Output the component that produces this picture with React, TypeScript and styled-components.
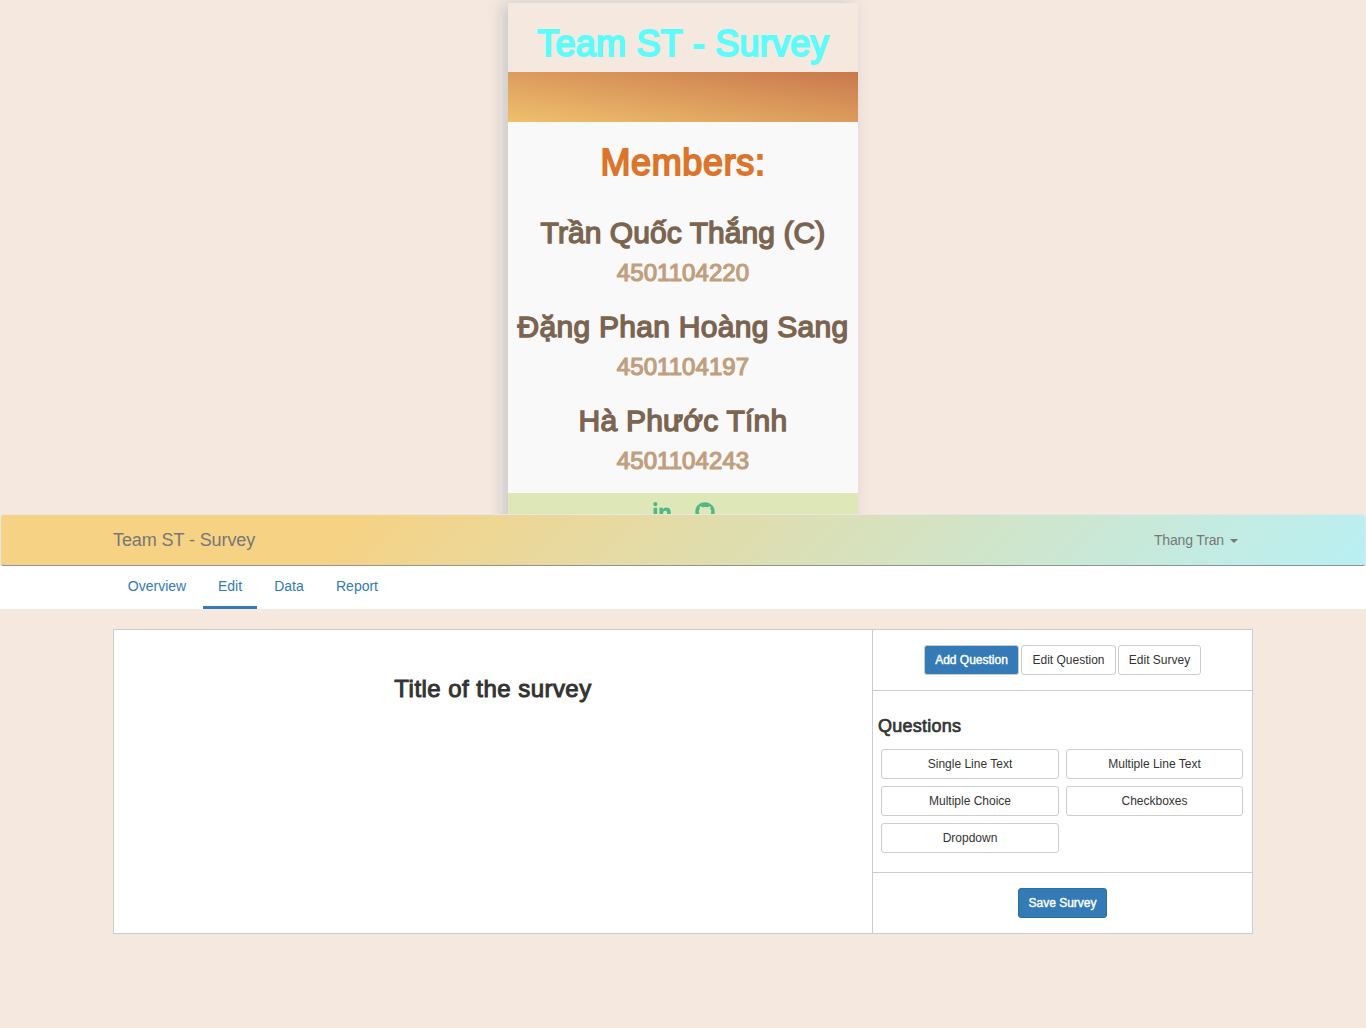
import React from 'react';
import styled, { createGlobalStyle } from 'styled-components';
import { FaLinkedinIn, FaGithub } from 'react-icons/fa';

const GlobalStyle = createGlobalStyle`
  *, *::before, *::after { box-sizing: border-box; }
  body {
    margin: 0;
    background: #f5e8df;
    color: #333;
    font: 14px/20px "Liberation Sans", Arial, sans-serif;
  }
`;

type TextProps = { $size: number; $color?: string; $spacing?: number; $stroke?: number };

const MediumText = styled.h2<TextProps>`
  margin: 0;
  font-size: ${(p) => p.$size}px;
  font-weight: 400;
  line-height: 1.1;
  white-space: nowrap;
  color: ${(p) => p.$color ?? '#333'};
  letter-spacing: ${(p) => p.$spacing ?? 0}px;
  -webkit-text-stroke: ${(p) => p.$stroke ?? 0.8}px currentColor;
`;

const Page = styled.div`
  min-height: 1028px;
`;

const Intro = styled.header`
  height: 514px;
  padding-top: 3px;
  overflow: hidden;
  display: flex;
  justify-content: center;
  align-items: flex-start;
`;

const Card = styled.section`
  width: 350px;
  height: 530px;
  flex: none;
  display: flex;
  flex-direction: column;
  text-align: center;
  box-shadow: -5px 0 15px 0 #c8c8c8;
`;

const CardTitle = styled.div`
  height: 69px;
  padding-top: 21px;
  display: flex;
  justify-content: center;
  background: #f5e8df;
`;

const Banner = styled.div`
  height: 50px;
  background: linear-gradient(to top right, #efc06d, #c9784c);
`;

const Members = styled.div`
  height: 371px;
  padding-top: 21px;
  background: #f9f9f9;
  display: flex;
  flex-direction: column;
  align-items: center;
`;

const Member = styled.div`
  display: flex;
  flex-direction: column;
  align-items: center;
  gap: 11px;
  height: 94px;
`;

const MemberList = styled.div`
  padding-top: 33px;
`;

const Social = styled.div`
  flex: 1;
  padding-top: 9px;
  display: flex;
  justify-content: center;
  gap: 23px;
  background: #dee7b8;
  color: #4fb985;
`;

const Navbar = styled.nav`
  height: 52px;
  border: 1px solid #e7e7e7;
  border-bottom-color: #8f9396;
  border-radius: 4px;
  background: linear-gradient(135deg, #f6d284 25%, #b9f0f4 100%);
  padding: 0 112px;
  display: flex;
  align-items: center;
  justify-content: space-between;
  color: #777;
`;

const Brand = styled.span`
  font-size: 18px;
  letter-spacing: -0.1px;
`;

const UserMenu = styled.span`
  display: flex;
  align-items: center;
  gap: 6px;
  padding-right: 15px;
  letter-spacing: -0.15px;
`;

const Caret = styled.i`
  border-top: 4px solid currentColor;
  border-left: 4px solid transparent;
  border-right: 4px solid transparent;
  margin-top: 2px;
`;

const Tabs = styled.div`
  height: 43px;
  padding-left: 113px;
  background: #fff;
  display: flex;
  gap: 2px;
`;

const Tab = styled.a<{ $active?: boolean; $width: number }>`
  width: ${(p) => p.$width}px;
  padding-top: 10px;
  text-align: center;
  color: #337ab7;
  border-bottom: 3px solid ${(p) => (p.$active ? '#337ab7' : 'transparent')};
`;

const Editor = styled.main`
  width: 1140px;
  height: 305px;
  margin: 20px auto 0;
  display: grid;
  grid-template-columns: 759px 1fr;
  border: 1px solid #ccc;
  background: #fff;
`;

const Preview = styled.div`
  border-right: 1px solid #ccc;
  padding-top: 46px;
  display: flex;
  justify-content: center;
  align-items: flex-start;
`;

const Sidebar = styled.aside`
  display: grid;
  grid-template-rows: 61px 182px 60px;
`;

const Modes = styled.div`
  display: flex;
  justify-content: center;
  align-items: center;
  gap: 2px;
  border-bottom: 1px solid #ccc;
`;

const Questions = styled.div`
  padding: 26px 9px 0 5px;
  border-bottom: 1px solid #ccc;
`;

const Choices = styled.div`
  margin: 12px 0 0 3px;
  display: grid;
  grid-template-columns: 178px 177px;
  gap: 7px;
`;

const Save = styled.div`
  display: flex;
  justify-content: center;
  align-items: center;
`;

const Button = styled.button<{ $primary?: boolean; $border?: string; $width?: number }>`
  width: ${(p) => (p.$width ? `${p.$width}px` : 'auto')};
  height: 30px;
  padding: 0;
  border: 1px solid ${(p) => p.$border ?? '#ccc'};
  border-radius: 3px;
  background: ${(p) => (p.$primary ? '#337ab7' : '#fff')};
  color: ${(p) => (p.$primary ? '#fff' : '#333')};
  font: 12px/18px "Liberation Sans", Arial, sans-serif;
  -webkit-text-stroke: ${(p) => (p.$primary ? '0.4px #fff' : '0')};
`;

const members = [
  { name: 'Trần Quốc Thắng (C)', id: '4501104220', spacing: 0.07 },
  { name: 'Đặng Phan Hoàng Sang', id: '4501104197', spacing: 0.28 },
  { name: 'Hà Phước Tính', id: '4501104243', spacing: 0.22 },
];

const questionTypes = ['Single Line Text', 'Multiple Line Text', 'Multiple Choice', 'Checkboxes', 'Dropdown'];

export default function App() {
  return (
    <Page>
      <GlobalStyle />
      <Intro>
        <Card>
          <CardTitle>
            <MediumText as="h1" $size={36} $color="#5efbfb" $spacing={0.25} $stroke={2}>Team ST - Survey</MediumText>
          </CardTitle>
          <Banner />
          <Members>
            <MediumText as="h1" $size={36} $color="#dc752b" $spacing={0.65} $stroke={1.8}>Members:</MediumText>
            <MemberList>
              {members.map((m) => (
                <Member key={m.id}>
                  <MediumText $size={30} $color="#7b6450" $spacing={m.spacing} $stroke={1.4}>{m.name}</MediumText>
                  <MediumText as="h3" $size={24} $color="#c09f7d" $spacing={0.06} $stroke={1.2}>{m.id}</MediumText>
                </Member>
              ))}
            </MemberList>
          </Members>
          <Social>
            <FaLinkedinIn size={20} />
            <FaGithub size={20} />
          </Social>
        </Card>
      </Intro>
      <Navbar>
        <Brand>Team ST - Survey</Brand>
        <UserMenu>Thang Tran<Caret /></UserMenu>
      </Navbar>
      <Tabs>
        <Tab $width={88}>Overview</Tab>
        <Tab $width={54} $active>Edit</Tab>
        <Tab $width={60}>Data</Tab>
        <Tab $width={72}>Report</Tab>
      </Tabs>
      <Editor>
        <Preview>
          <MediumText as="h3" $size={24} $spacing={0.46} $stroke={1}>Title of the survey</MediumText>
        </Preview>
        <Sidebar>
          <Modes>
            <Button $primary $width={95}>Add Question</Button>
            <Button $width={95}>Edit Question</Button>
            <Button $width={83}>Edit Survey</Button>
          </Modes>
          <Questions>
            <MediumText as="h4" $size={18} $spacing={0.26} $stroke={0.7}>Questions</MediumText>
            <Choices>
              {questionTypes.map((q) => <Button key={q}>{q}</Button>)}
            </Choices>
          </Questions>
          <Save>
            <Button $primary $border="#2e6da4" $width={89}>Save Survey</Button>
          </Save>
        </Sidebar>
      </Editor>
    </Page>
  );
}
